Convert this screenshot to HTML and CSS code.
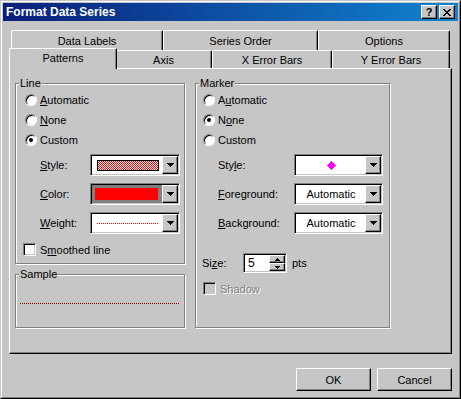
FILE: index.html
```html
<!DOCTYPE html>
<html>
<head>
<meta charset="utf-8">
<title>Format Data Series</title>
<link rel="stylesheet" href="styles.css">
</head>
<body>
<div class="window">
  <div class="frame">
    <div class="titlebar">
      <span class="title">Format Data Series</span>
      <div class="tbtns">
        <div class="tbtn help">?</div>
        <div class="tbtn close">
          <svg width="8" height="7" viewBox="0 0 8 7"><path d="M0 0h2v1h1v1h2V1h1V0h2v1H7v1H6v1H5v1h1v1h1v1h1v1H6V6H5V5H3v1H2v1H0V6h1V5h1V4h1V3H2V2H1V1H0z"/></svg>
        </div>
      </div>
    </div>
    <div class="content">
      <div class="tabs">
        <div class="tabrow back">
          <div class="tab t-labels">Data Labels</div>
          <div class="tab t-order">Series Order</div>
          <div class="tab t-options">Options</div>
        </div>
        <div class="tabrow front">
          <div class="tab t-patterns active">Patterns</div>
          <div class="tab t-axis">Axis</div>
          <div class="tab t-xerr">X Error Bars</div>
          <div class="tab t-yerr">Y Error Bars</div>
        </div>
      </div>
      <div class="panel">
        <div class="col-left">
          <div class="group line-group">
            <div class="legend">Line</div>
            <div class="radios">
              <div class="opt"><span class="radio"></span><span><u>A</u>utomatic</span></div>
              <div class="opt"><span class="radio"></span><span><u>N</u>one</span></div>
              <div class="opt"><span class="radio on"></span><span>Custom</span></div>
            </div>
            <div class="fields">
              <div class="field">
                <span class="flabel"><u>S</u>tyle:</span>
                <div class="combo">
                  <div class="combo-field"><span class="pattern"></span></div>
                  <div class="combo-btn"><svg width="7" height="4" viewBox="0 0 7 4"><path d="M0 0h7v1H0zM1 1h5v1H1zM2 2h3v1H2zM3 3h1v1H3z"/></svg></div>
                </div>
              </div>
              <div class="field">
                <span class="flabel"><u>C</u>olor:</span>
                <div class="combo">
                  <div class="combo-field color"><span class="swatch"></span></div>
                  <div class="combo-btn"><svg width="7" height="4" viewBox="0 0 7 4"><path d="M0 0h7v1H0zM1 1h5v1H1zM2 2h3v1H2zM3 3h1v1H3z"/></svg></div>
                </div>
              </div>
              <div class="field">
                <span class="flabel"><u>W</u>eight:</span>
                <div class="combo">
                  <div class="combo-field"><span class="weight"></span></div>
                  <div class="combo-btn"><svg width="7" height="4" viewBox="0 0 7 4"><path d="M0 0h7v1H0zM1 1h5v1H1zM2 2h3v1H2zM3 3h1v1H3z"/></svg></div>
                </div>
              </div>
            </div>
            <div class="check-row"><span class="check"></span><span>S<u>m</u>oothed line</span></div>
          </div>
          <div class="group sample-group">
            <div class="legend">Sample</div>
            <div class="sample-line"></div>
          </div>
        </div>
        <div class="group marker-group">
          <div class="legend">Marker</div>
          <div class="radios">
            <div class="opt"><span class="radio"></span><span>A<u>u</u>tomatic</span></div>
            <div class="opt"><span class="radio on"></span><span>N<u>o</u>ne</span></div>
            <div class="opt"><span class="radio"></span><span>Custom</span></div>
          </div>
          <div class="fields">
            <div class="field">
              <span class="flabel">Sty<u>l</u>e:</span>
              <div class="combo">
                <div class="combo-field"><svg width="9" height="9" viewBox="0 0 9 9"><path d="M4 0h1v1h1v1h1v1h1v1h1v1H8v1H7v1H6v1H5v1H4V8H3V7H2V6H1V5H0V4h1V3h1V2h1V1h1z" fill="#ff00ff"/></svg></div>
                <div class="combo-btn"><svg width="7" height="4" viewBox="0 0 7 4"><path d="M0 0h7v1H0zM1 1h5v1H1zM2 2h3v1H2zM3 3h1v1H3z"/></svg></div>
              </div>
            </div>
            <div class="field">
              <span class="flabel"><u>F</u>oreground:</span>
              <div class="combo">
                <div class="combo-field">Automatic</div>
                <div class="combo-btn"><svg width="7" height="4" viewBox="0 0 7 4"><path d="M0 0h7v1H0zM1 1h5v1H1zM2 2h3v1H2zM3 3h1v1H3z"/></svg></div>
              </div>
            </div>
            <div class="field">
              <span class="flabel"><u>B</u>ackground:</span>
              <div class="combo">
                <div class="combo-field">Automatic</div>
                <div class="combo-btn"><svg width="7" height="4" viewBox="0 0 7 4"><path d="M0 0h7v1H0zM1 1h5v1H1zM2 2h3v1H2zM3 3h1v1H3z"/></svg></div>
              </div>
            </div>
          </div>
          <div class="size-row">
            <span class="slabel">Si<u>z</u>e:</span>
            <div class="spin">
              <span class="spin-val">5</span>
              <div class="spin-btns">
                <div class="sbtn"><svg width="5" height="3" viewBox="0 0 5 3"><path d="M2 0h1v1h1v1h1v1H0V2h1V1h1z"/></svg></div>
                <div class="sbtn"><svg width="5" height="3" viewBox="0 0 5 3"><path d="M0 0h5v1H4v1H3v1H2V2H1V1H0z"/></svg></div>
              </div>
            </div>
            <span class="pts">pts</span>
          </div>
          <div class="check-row disabled"><span class="check"></span><span>Shadow</span></div>
        </div>
      </div>
      <div class="buttons">
        <button class="btn">OK</button>
        <button class="btn">Cancel</button>
      </div>
    </div>
  </div>
</div>
</body>
</html>
```

FILE: styles.css
```css
html, body {
  margin: 0;
  padding: 0;
  background: #c6c6c6;
}

body {
  font-family: "Liberation Sans", Arial, sans-serif;
  font-size: 11px;
  color: #000;
}

.window {
  width: 461px;
  height: 399px;
  box-sizing: border-box;
  border: 1px solid;
  border-color: #c6c6c6 #000 #000 #c6c6c6;
  background: #c6c6c6;
}

.frame {
  height: 100%;
  box-sizing: border-box;
  border: 1px solid;
  border-color: #fff #808080 #808080 #fff;
  padding: 1px;
}

.titlebar {
  height: 18px;
  display: flex;
  align-items: center;
  padding: 0 3px 0 3px;
  background: linear-gradient(to right, #0a1e7a, #1084d0);
}

.title {
  flex: 1;
  color: #fff;
  font-weight: bold;
  font-size: 12px;
}

.tbtns {
  display: flex;
  gap: 2px;
}

.tbtn {
  width: 16px;
  height: 14px;
  box-sizing: border-box;
  border: 1px solid;
  border-color: #fff #000 #000 #fff;
  box-shadow: inset -1px -1px #808080;
  background: #c6c6c6;
  display: flex;
  align-items: center;
  justify-content: center;
  font-weight: bold;
  font-size: 11px;
  line-height: 1;
}

.content {
  padding: 9px 6px 0 6px;
}

.tabs {
  margin-left: 2px;
  width: 439px;
}

.tabrow {
  display: flex;
  align-items: flex-end;
}

.tab {
  box-sizing: border-box;
  border: 1px solid;
  border-color: #fff #000 transparent #fff;
  border-bottom: 0;
  border-radius: 2px 2px 0 0;
  box-shadow: inset -1px 0 #808080;
  background: #c6c6c6;
  display: flex;
  align-items: center;
  justify-content: center;
  white-space: nowrap;
}

.back .tab { height: 20px; }
.front .tab { height: 18px; }

.t-labels { width: 152px; }
.t-order { width: 155px; }
.t-options { width: 132px; }
.t-patterns { width: 104px; }
.t-axis { width: 97px; }
.t-xerr { width: 120px; }
.t-yerr { width: 118px; }

.front .tab.active {
  width: 108px;
  height: 21px;
  margin: -2px -2px -1px -2px;
  position: relative;
  z-index: 1;
  padding-bottom: 2px;
}

.panel {
  width: 443px;
  height: 286px;
  box-sizing: border-box;
  border: 1px solid;
  border-color: #fff #000 #000 #fff;
  box-shadow: inset -1px -1px #808080;
  display: flex;
  align-items: flex-start;
  gap: 10px;
  padding: 14px 0 0 5px;
}

.col-left {
  display: flex;
  flex-direction: column;
  width: 170px;
}

.group {
  box-sizing: border-box;
  border: 1px solid #808080;
  box-shadow: inset 1px 1px #fff, 1px 1px #fff;
}

.legend {
  width: fit-content;
  height: 13px;
  line-height: 13px;
  margin: -7px 0 0 3px;
  padding: 0 1px;
  background: #c6c6c6;
}

.line-group {
  width: 170px;
  height: 181px;
}

.sample-group {
  width: 170px;
  height: 54px;
  margin-top: 10px;
}

.sample-line {
  margin: 22px 0 0 4px;
  width: 160px;
  height: 1px;
  background: repeating-linear-gradient(to right, #800000 0 1px, transparent 1px 2px);
}

.marker-group {
  width: 195px;
  height: 245px;
}

.radios {
  display: flex;
  flex-direction: column;
}

.line-group .radios { padding-left: 9px; }
.marker-group .radios { padding-left: 7px; }

.opt {
  height: 20px;
  display: flex;
  align-items: center;
  gap: 3px;
}

.radio {
  width: 12px;
  height: 12px;
  box-sizing: border-box;
  border-radius: 50%;
  border: 1px solid;
  border-color: #808080 #fff #fff #808080;
  box-shadow: inset 1px 1px #000;
  background: #fff;
  display: flex;
  align-items: center;
  justify-content: center;
}

.radio.on::after {
  content: "";
  width: 4px;
  height: 4px;
  border-radius: 50%;
  background: #000;
}

.fields {
  display: flex;
  flex-direction: column;
  gap: 7px;
  margin-top: 4px;
}

.field {
  display: flex;
  align-items: center;
  height: 22px;
}

.line-group .field { padding-left: 24px; }
.line-group .flabel { width: 50px; }
.line-group .combo { width: 90px; }

.marker-group .field { padding-left: 22px; }
.marker-group .flabel { width: 76px; }
.marker-group .combo { width: 89px; }

.combo {
  height: 22px;
  box-sizing: border-box;
  border: 1px solid;
  border-color: #808080 #fff #fff #808080;
  box-shadow: inset 1px 1px #000, inset -1px -1px #c6c6c6;
  background: #fff;
  padding: 1px;
  display: flex;
}

.combo-field {
  flex: 1;
  display: flex;
  align-items: center;
  justify-content: center;
  padding-left: 1px;
}

.combo-field.color {
  background: #808080;
  padding: 3px 4px 3px 3px;
  align-items: stretch;
}

.swatch {
  flex: 1;
  background: #ff0000;
}

.pattern {
  width: 62px;
  height: 11px;
  box-sizing: border-box;
  border: 1px solid #000;
  background-color: #fff;
  background-image: conic-gradient(#ff0000 25%, #fff 0 50%, #ff0000 0 75%, #fff 0);
  background-size: 2px 2px;
}

.weight {
  width: 61px;
  height: 1px;
  background: repeating-linear-gradient(to right, #ff0000 0 1px, transparent 1px 2px);
}

.combo-btn {
  width: 16px;
  box-sizing: border-box;
  border: 1px solid;
  border-color: #fff #000 #000 #fff;
  box-shadow: inset -1px -1px #808080;
  background: #c6c6c6;
  display: flex;
  align-items: center;
  justify-content: center;
}

.check-row {
  display: flex;
  align-items: center;
  height: 13px;
  gap: 4px;
  margin-top: 9px;
}

.line-group .check-row { padding-left: 7px; }
.marker-group .check-row { padding-left: 7px; }

.check {
  width: 13px;
  height: 13px;
  box-sizing: border-box;
  border: 1px solid;
  border-color: #808080 #fff #fff #808080;
  box-shadow: inset 1px 1px #000, inset -1px -1px #c6c6c6;
  background: #fff;
}

.check-row.disabled .check {
  background: #c6c6c6;
}

.check-row.disabled {
  color: #808080;
  text-shadow: 1px 1px #fff;
}

.size-row {
  display: flex;
  align-items: center;
  height: 20px;
  margin-top: 19px;
  padding-left: 6px;
}

.slabel { width: 41px; }

.spin {
  width: 44px;
  height: 20px;
  box-sizing: border-box;
  border: 1px solid;
  border-color: #808080 #fff #fff #808080;
  box-shadow: inset 1px 1px #000, inset -1px -1px #c6c6c6;
  background: #fff;
  padding: 1px;
  display: flex;
}

.spin-val {
  flex: 1;
  padding-left: 3px;
  display: flex;
  align-items: center;
  font-size: 12px;
}

.spin-btns {
  width: 16px;
  display: flex;
  flex-direction: column;
}

.sbtn {
  flex: 1;
  box-sizing: border-box;
  border: 1px solid;
  border-color: #fff #000 #000 #fff;
  box-shadow: inset -1px -1px #808080;
  background: #c6c6c6;
  display: flex;
  align-items: center;
  justify-content: center;
}

.pts { margin-left: 5px; }

.buttons {
  display: flex;
  justify-content: flex-end;
  gap: 6px;
  margin-top: 14px;
}

.btn {
  width: 75px;
  height: 23px;
  box-sizing: border-box;
  border: 1px solid;
  border-color: #fff #000 #000 #fff;
  box-shadow: inset -1px -1px #808080;
  background: #c6c6c6;
  font-family: "Liberation Sans", Arial, sans-serif;
  font-size: 11px;
  color: #000;
  padding: 0;
}
```
